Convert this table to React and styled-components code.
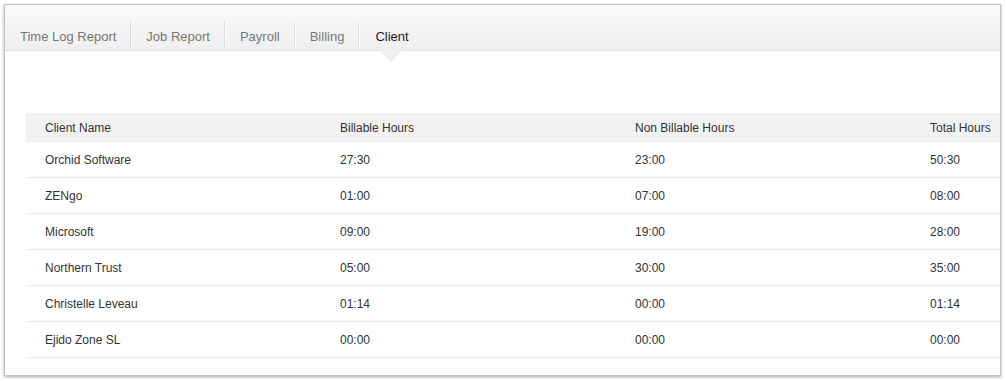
import styled, { createGlobalStyle } from 'styled-components';

const Global = createGlobalStyle`
  body {
    margin: 0;
    background: #fff;
    font-family: "Liberation Sans", Arial, sans-serif;
  }
`

const Panel = styled.div`
  margin: 4px;
  width: 995px;
  height: 370px;
  border: 1px solid #c4c4c4;
  box-shadow: 0 1px 3px rgba(0, 0, 0, 0.35);
  background: #fff;
  overflow: hidden;
`

const TabBar = styled.div`
  height: 45px;
  display: flex;
  align-items: flex-end;
  background: linear-gradient(#fafafa, #efefef);
  border-bottom: 1px solid #e2e2e2;
`

const Tab = styled.div`
  position: relative;
  height: 29px;
  padding-top: 2px;
  box-sizing: border-box;
  display: flex;
  align-items: center;
  font-size: 13px;
  color: ${props => props.$active ? "#1a1a1a" : "#777"};
  border-right: ${props => props.$active ? "none" : "1px solid #dcdcdc"};
  box-shadow: ${props => props.$active ? "none" : "1px 0 0 #fff"};
  padding-left: ${props => props.$active ? "16px" : "15px"};
  padding-right: 14px;

  &::after {
    content: "";
    display: ${props => props.$active ? "block" : "none"};
    position: absolute;
    left: 50%;
    top: 29px;
    margin-left: -12px;
    border-left: 12px solid transparent;
    border-right: 12px solid transparent;
    border-top: 12px solid #efefef;
  }
`

const Content = styled.div`
  padding: 62px 0 0 21px;
`

const Table = styled.div`
  width: 1180px;
  font-size: 12px;
  color: #333;
`

const Row = styled.div`
  display: grid;
  grid-template-columns: repeat(4, 295px);
  height: ${props => props.$head ? "29px" : "35px"};
  align-items: center;
  background: ${props => props.$head ? "#f2f2f2" : "#fff"};
  border-bottom: ${props => props.$head ? "none" : "1px solid #e9e9e9"};
`

const Cell = styled.div`
  padding-left: 19px;
  padding-top: 1px;
`

const tabs = ["Time Log Report", "Job Report", "Payroll", "Billing", "Client"];

const rows = [
  ["Orchid Software", "27:30", "23:00", "50:30"],
  ["ZENgo", "01:00", "07:00", "08:00"],
  ["Microsoft", "09:00", "19:00", "28:00"],
  ["Northern Trust", "05:00", "30:00", "35:00"],
  ["Christelle Leveau", "01:14", "00:00", "01:14"],
  ["Ejido Zone SL", "00:00", "00:00", "00:00"],
];

const App = () => {
  return (
    <>
      <Global />
      <Panel>
        <TabBar>
          {tabs.map(t => (
            <Tab key={t} $active={t === "Client"}>{t}</Tab>
          ))}
        </TabBar>
        <Content>
          <Table>
            <Row $head>
              <Cell>Client Name</Cell>
              <Cell>Billable Hours</Cell>
              <Cell>Non Billable Hours</Cell>
              <Cell>Total Hours</Cell>
            </Row>
            {rows.map(r => (
              <Row key={r[0]}>
                {r.map((c, i) => <Cell key={i}>{c}</Cell>)}
              </Row>
            ))}
          </Table>
        </Content>
      </Panel>
    </>
  )
}

export default App;
